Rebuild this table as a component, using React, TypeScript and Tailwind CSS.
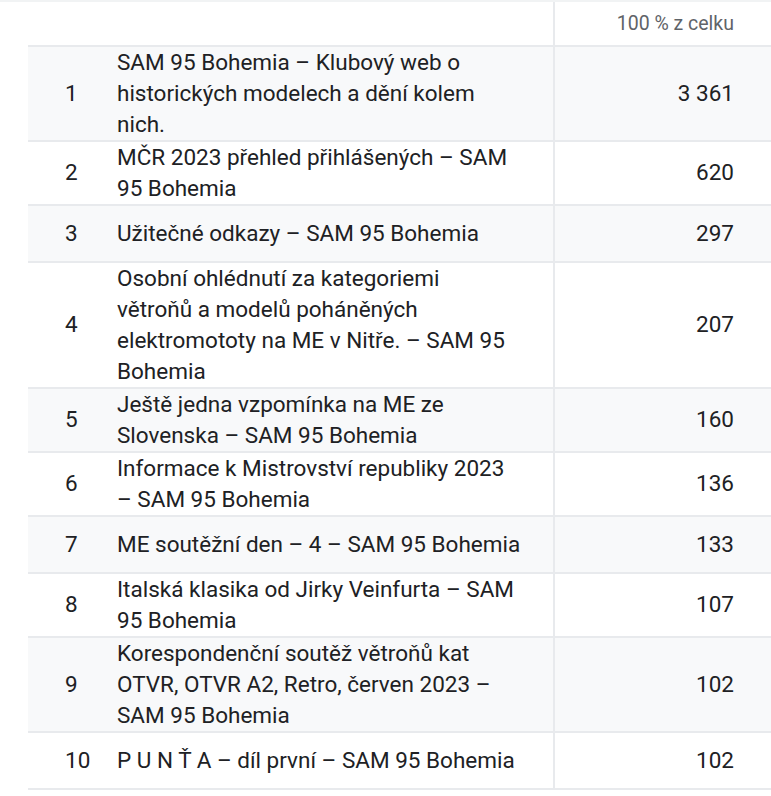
const rows: { n: number; title: string; value: string }[] = [
  { n: 1, title: "SAM 95 Bohemia – Klubový web o\nhistorických modelech a dění kolem\nnich.", value: "3 361" },
  { n: 2, title: "MČR 2023 přehled přihlášených – SAM\n95 Bohemia", value: "620" },
  { n: 3, title: "Užitečné odkazy – SAM 95 Bohemia", value: "297" },
  { n: 4, title: "Osobní ohlédnutí za kategoriemi\nvětroňů a modelů poháněných\nelektromototy na ME v Nitře. – SAM 95\nBohemia", value: "207" },
  { n: 5, title: "Ještě jedna vzpomínka na ME ze\nSlovenska – SAM 95 Bohemia", value: "160" },
  { n: 6, title: "Informace k Mistrovství republiky 2023\n– SAM 95 Bohemia", value: "136" },
  { n: 7, title: "ME soutěžní den – 4 – SAM 95 Bohemia", value: "133" },
  { n: 8, title: "Italská klasika od Jirky Veinfurta – SAM\n95 Bohemia", value: "107" },
  { n: 9, title: "Korespondenční soutěž větroňů kat\nOTVR, OTVR A2, Retro, červen 2023 –\nSAM 95 Bohemia", value: "102" },
  { n: 10, title: "P U N Ť A – díl první – SAM 95 Bohemia", value: "102" },
];

export default function App() {
  return (
    <div className="w-[771px] h-[796px] bg-white text-[#202124] font-['Roboto',sans-serif] border-t-2 border-[#f1f3f4]">
      <div className="flex h-[43px]">
        <div className="w-[553px]" />
        <div className="flex-1 border-l-2 border-[#e8eaed] flex items-center justify-end pr-[37px] text-[19.5px] text-[#5f6368]">
          100 % z celku
        </div>
      </div>
      <div className="ml-[28px]">
        {rows.map((r) => (
          <div
            key={r.n}
            className={`flex min-h-[57px] border-t-2 border-[#e8eaed] ${r.n % 2 === 1 ? "bg-[#f8f9fa]" : "bg-white"}`}
          >
            <div className="w-[89px] pl-[37px] flex items-center text-[22.5px]">{r.n}</div>
            <div className="w-[436px] pr-[10px] flex items-center text-[22.5px] leading-[31px] whitespace-pre-line">
              {r.title}
            </div>
            <div className="flex-1 border-l-2 border-[#e8eaed] flex items-center justify-end pr-[37px] text-[22.5px]">
              {r.value}
            </div>
          </div>
        ))}
        <div className="border-t-2 border-[#e8eaed]" />
      </div>
    </div>
  );
}
